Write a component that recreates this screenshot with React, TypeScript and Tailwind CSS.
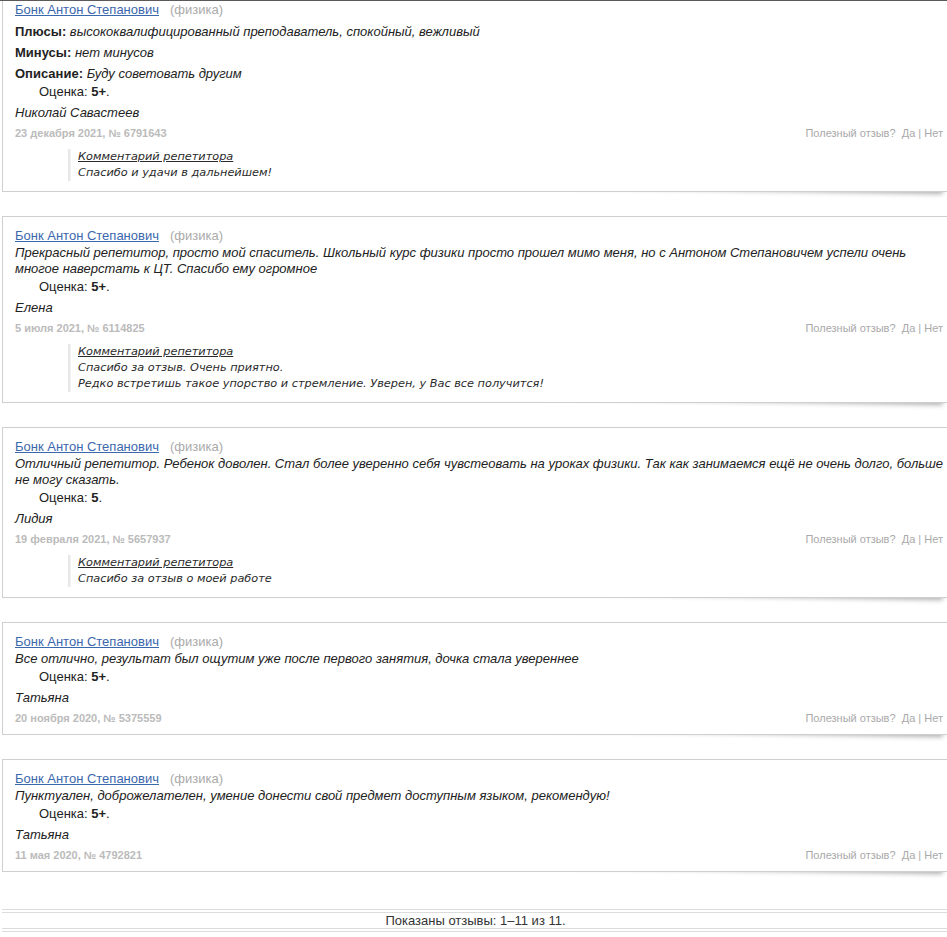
import React from "react";

type Review = {
  pros?: string;
  cons?: string;
  desc?: string;
  text?: string;
  grade: string;
  author: string;
  date: string;
  reply?: string[];
};

const reviews: Review[] = [
  {
    pros: "высококвалифицированный преподаватель, спокойный, вежливый",
    cons: "нет минусов",
    desc: "Буду советовать другим",
    grade: "5+",
    author: "Николай Савастеев",
    date: "23 декабря 2021, № 6791643",
    reply: ["Спасибо и удачи в дальнейшем!"],
  },
  {
    text: "Прекрасный репетитор, просто мой спаситель. Школьный курс физики просто прошел мимо меня, но с Антоном Степановичем успели очень многое наверстать к ЦТ. Спасибо ему огромное",
    grade: "5+",
    author: "Елена",
    date: "5 июля 2021, № 6114825",
    reply: [
      "Спасибо за отзыв. Очень приятно.",
      "Редко встретишь такое упорство и стремление. Уверен, у Вас все получится!",
    ],
  },
  {
    text: "Отличный репетитор. Ребенок доволен. Стал более уверенно себя чувстеовать на уроках физики. Так как занимаемся ещё не очень долго, больше не могу сказать.",
    grade: "5",
    author: "Лидия",
    date: "19 февраля 2021, № 5657937",
    reply: ["Спасибо за отзыв о моей работе"],
  },
  {
    text: "Все отлично, результат был ощутим уже после первого занятия, дочка стала увереннее",
    grade: "5+",
    author: "Татьяна",
    date: "20 ноября 2020, № 5375559",
  },
  {
    text: "Пунктуален, доброжелателен, умение донести свой предмет доступным языком, рекомендую!",
    grade: "5+",
    author: "Татьяна",
    date: "11 мая 2020, № 4792821",
  },
];

function Field({ label, value }: { label: string; value: string }) {
  return (
    <div className="mt-[5px] leading-4">
      <b className="font-bold">{label}:</b> <i>{value}</i>
    </div>
  );
}

function ReviewCard({ review }: { review: Review }) {
  return (
    <div className="relative mb-6">
      {/* lifted shadow under the right half of the card */}
      <div className="absolute right-[4px] bottom-[3px] w-[52%] h-[14px] origin-right rotate-[1deg] shadow-[0_5px_5px_rgba(0,0,0,0.32)]" />
      <div
        className={
          "relative bg-white border border-[#cfcfcf] ml-[2px] w-[948px] pl-3 pr-[2px] pt-[9px] " +
          (review.reply ? "pb-[10px]" : "pb-[8px]")
        }
      >
        <div className="leading-[19px]">
          <a href="#" className="text-[#3b67ad] underline">
            Бонк Антон Степанович
          </a>
          <span className="text-[#aaaaaa] ml-[11px]">(физика)</span>
        </div>
        {review.pros && <Field label="Плюсы" value={review.pros} />}
        {review.cons && <Field label="Минусы" value={review.cons} />}
        {review.desc && <Field label="Описание" value={review.desc} />}
        {review.text && <div className="italic leading-4">{review.text}</div>}
        <div className="mt-[2px] leading-4 pl-6">
          Оценка: <b>{review.grade}</b>.
        </div>
        <div className="mt-[5px] leading-4 italic">{review.author}</div>
        <div className="mt-1 pr-1 flex justify-between items-center leading-4 text-[11px]">
          <span className="font-bold text-[#bbbbbb]">{review.date}</span>
          <span className="text-[#a9a9a9]">
            Полезный отзыв?&nbsp; <a href="#">Да</a> | <a href="#">Нет</a>
          </span>
        </div>
        {review.reply && (
          <div className="mt-[8px] ml-[53px] flex">
            <div className="w-[3px] bg-gradient-to-r from-[#e2e2e2] to-[#f3f3f3]" />
            <div className="pl-[7px] italic text-[11.3px] leading-4 text-[#2a2a2a] font-['DejaVu_Sans',Verdana,sans-serif]">
              <div className="underline">Комментарий репетитора</div>
              {review.reply.map((line, i) => (
                <div key={i}>{line}</div>
              ))}
            </div>
          </div>
        )}
      </div>
    </div>
  );
}

export default function App() {
  return (
    <div className="w-[947px] h-[937px] overflow-hidden bg-white border-t border-[#5a5a5a] text-[13px] text-[#222] font-['Liberation_Sans',Arial,sans-serif]">
      <div className="-mt-[11px]">
        {reviews.map((r, i) => (
          <ReviewCard key={i} review={r} />
        ))}
        <div className="mt-[37px] ml-[2px] w-[960px] border-y border-[#dcdcdc] py-[2px]">
          <div className="border-y border-[#dcdcdc] h-[17px] flex items-center">
            <div className="w-[947px] text-center text-[13px] text-[#333] leading-4">
              Показаны отзывы: 1–11 из 11.
            </div>
          </div>
        </div>
      </div>
    </div>
  );
}
